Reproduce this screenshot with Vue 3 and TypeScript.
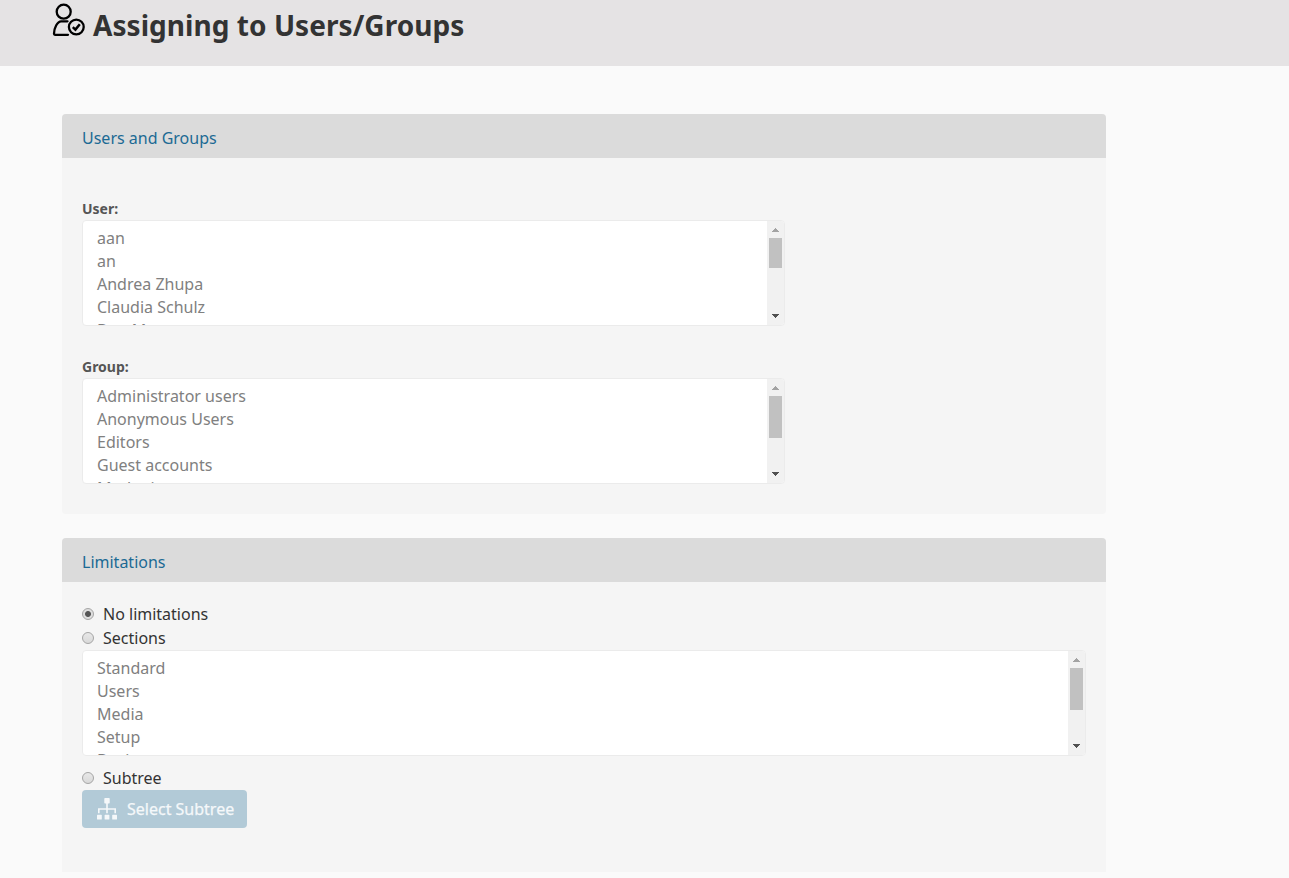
<script setup lang="ts">
import { ref } from 'vue'

interface ListBox {
  label: string
  items: string[]
  thumb: string
}

const assignees: ListBox[] = [
  { label: 'User:', items: ['aan', 'an', 'Andrea Zhupa', 'Claudia Schulz', 'Dan Meer'], thumb: 'short' },
  { label: 'Group:', items: ['Administrator users', 'Anonymous Users', 'Editors', 'Guest accounts', 'Marketing'], thumb: 'long' },
]
const sections: string[] = ['Standard', 'Users', 'Media', 'Setup', 'Design']
const limitation = ref<string>('none')
</script>

<template>
  <div class="page">
    <header class="header">
      <svg class="user-icon" width="34" height="36" viewBox="0 0 34 36" fill="none" stroke="#000" stroke-width="2.3">
        <circle cx="11.7" cy="10.7" r="7" />
        <path d="M15.5 20.3H9.2C5.2 20.3 2 27.5 2 32.8Q2 33.8 3 33.8H16" stroke-linecap="round" />
        <circle cx="24.3" cy="26" r="7.4" />
        <path d="M20.8 26.2L23.4 28.6L27.8 23.3" stroke-width="2.5" />
      </svg>
      <h1>Assigning to Users/Groups</h1>
    </header>

    <main>
      <section class="card users">
        <h2>Users and Groups</h2>
        <div class="body">
          <div v-for="box in assignees" :key="box.label" class="field">
            <div class="label">{{ box.label }}</div>
            <div class="listbox narrow">
              <ul><li v-for="item in box.items" :key="item">{{ item }}</li></ul>
              <div class="scrollbar">
                <svg class="arrow" width="7" height="4" shape-rendering="crispEdges"><path d="M3 0h1v1h1v1h1v1h1v1H0V3h1V2h1V1h1z" fill="#a3a3a3" /></svg>
                <span class="thumb" :class="box.thumb" />
                <svg class="arrow down" width="7" height="4" shape-rendering="crispEdges"><path d="M0 0h7v1H6v1H5v1H4v1H3V3H2V2H1V1H0z" fill="#505050" /></svg>
              </div>
            </div>
          </div>
        </div>
      </section>

      <section class="card limits">
        <h2>Limitations</h2>
        <div class="body">
          <label class="option"><input v-model="limitation" type="radio" value="none"><span>No limitations</span></label>
          <label class="option"><input v-model="limitation" type="radio" value="sections"><span>Sections</span></label>
          <div class="listbox">
            <ul><li v-for="item in sections" :key="item">{{ item }}</li></ul>
            <div class="scrollbar">
              <svg class="arrow" width="7" height="4" shape-rendering="crispEdges"><path d="M3 0h1v1h1v1h1v1h1v1H0V3h1V2h1V1h1z" fill="#a3a3a3" /></svg>
              <span class="thumb long" />
              <svg class="arrow down" width="7" height="4" shape-rendering="crispEdges"><path d="M0 0h7v1H6v1H5v1H4v1H3V3H2V2H1V1H0z" fill="#505050" /></svg>
            </div>
          </div>
          <label class="option subtree"><input v-model="limitation" type="radio" value="subtree"><span>Subtree</span></label>
          <button type="button" disabled>
            <svg width="20" height="22" viewBox="0 0 20 22" fill="#f5f8fa">
              <rect x="7.3" y="0" width="5.4" height="5.4" rx=".7" />
              <path d="M9.2 5h1.6v5.2H19v5h-1.6v-3.5h-6.6v3.5H9.2v-3.5H2.6v3.5H1v-5h8.2z" />
              <rect x="0" y="16.8" width="4.8" height="4.8" rx=".6" />
              <rect x="7.6" y="16.8" width="4.8" height="4.8" rx=".6" />
              <rect x="15.2" y="16.8" width="4.8" height="4.8" rx=".6" />
            </svg>
            <span>Select Subtree</span>
          </button>
        </div>
      </section>
    </main>
  </div>
</template>

<style>
body { margin: 0; background: #fafafa; overflow: hidden; }
</style>

<style scoped>
* { box-sizing: border-box; }
.page { height: 878px; overflow: hidden; font-family: "Noto Sans", "Open Sans", sans-serif; font-size: 16px; color: #333; }
.header { display: flex; height: 66px; padding-left: 52px; background: #e5e3e4; }
.user-icon { display: block; flex: none; margin-top: 1px; }
h1 { margin: 5px 0 0 7px; font-size: 28px; line-height: 40px; font-weight: 700; letter-spacing: .05px; color: #333; white-space: nowrap; }
main { width: 1044px; margin: 48px 0 0 62px; }
.card { border-radius: 4px; overflow: hidden; background: #f5f5f5; }
.users { height: 400px; margin-bottom: 24px; }
.limits { height: 334px; border-radius: 4px 4px 0 0; }
h2 { height: 44px; margin: 0; padding: 2px 20px 0; background: #dbdbdb; font-size: 16px; line-height: 44px; font-weight: 400; color: #1c6a94; }
.body { padding: 0 20px; }
.users .body { padding-top: 40px; }
.field { height: 158px; }
.label { height: 22px; font-size: 14px; line-height: 22px; font-weight: 700; color: #555; }
.listbox { display: flex; justify-content: space-between; height: 106px; border: 1px solid #ebebeb; border-radius: 4px; background: #fff; overflow: hidden; }
.narrow { width: 703px; }
ul { margin: 0; padding: 6px 14px 0; list-style: none; color: #808080; }
li { height: 23px; line-height: 23px; white-space: nowrap; }
.scrollbar { display: flex; flex-direction: column; width: 17px; padding: 7px 2px 7px; background: #f1f1f1; }
.arrow { display: block; flex: none; margin: 0 0 0 3px; }
.down { margin-top: auto; }
.thumb { flex: none; width: 13px; margin-top: 6px; background: #c1c1c1; }
.short { height: 30px; }
.long { height: 42px; }
.limits .body { padding-top: 20px; }
.option { display: flex; align-items: center; height: 24px; color: #333; }
.option input { appearance: none; display: block; width: 12px; height: 12px; margin: 0 9px 0 0; border: 1px solid #a5a5a5; border-radius: 50%; background: linear-gradient(#e8e8e8, #d9d9d9); }
.option input:checked { background: radial-gradient(circle, #555 0 2.5px, #dedede 3.4px); }
.subtree { margin-top: 10px; }
button { display: flex; align-items: center; width: 165px; height: 38px; margin: 0; padding: 0 0 0 15px; border: 0; border-radius: 4px; background: #b2cad7; color: #f5f8fa; font-family: inherit; font-size: 16px; white-space: nowrap; -webkit-text-stroke: .25px #f5f8fa; }
button svg { flex: none; margin-right: 10px; }
</style>
